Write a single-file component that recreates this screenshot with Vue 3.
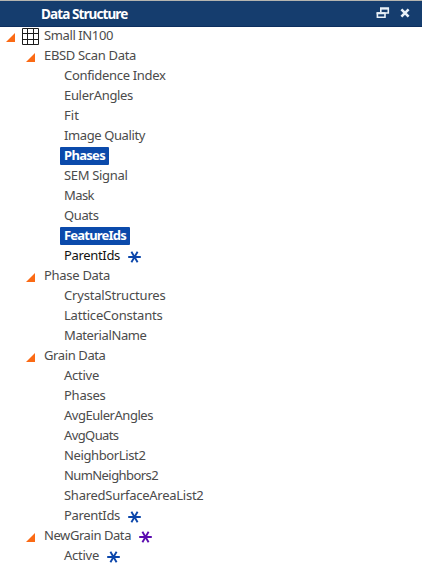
<script setup>
import { ref, onMounted } from 'vue'

// level: nesting depth, w: label width in px
const rows = [
  { label: 'Small IN100', level: 0, w: 69, grid: true },
  { label: 'EBSD Scan Data', level: 1, w: 92 },
  { label: 'Confidence Index', level: 2, w: 101.5 },
  { label: 'EulerAngles', level: 2, w: 69 },
  { label: 'Fit', level: 2, w: 15 },
  { label: 'Image Quality', level: 2, w: 81 },
  { label: 'Phases', level: 2, w: 41, selected: true },
  { label: 'SEM Signal', level: 2, w: 63.5 },
  { label: 'Mask', level: 2, w: 30 },
  { label: 'Quats', level: 2, w: 34.5 },
  { label: 'FeatureIds', level: 2, w: 62, selected: true },
  { label: 'ParentIds', level: 2, w: 56, mark: 'blue', dark: true },
  { label: 'Phase Data', level: 1, w: 66 },
  { label: 'CrystalStructures', level: 2, w: 101.5 },
  { label: 'LatticeConstants', level: 2, w: 98.5 },
  { label: 'MaterialName', level: 2, w: 82.5 },
  { label: 'Grain Data', level: 1, w: 61.5 },
  { label: 'Active', level: 2, w: 35 },
  { label: 'Phases', level: 2, w: 41.5 },
  { label: 'AvgEulerAngles', level: 2, w: 89 },
  { label: 'AvgQuats', level: 2, w: 54.5 },
  { label: 'NeighborList2', level: 2, w: 81.5 },
  { label: 'NumNeighbors2', level: 2, w: 94 },
  { label: 'SharedSurfaceAreaList2', level: 2, w: 139.5 },
  { label: 'ParentIds', level: 2, w: 56, mark: 'blue' },
  { label: 'NewGrain Data', level: 1, w: 87, mark: 'purple' },
  { label: 'Active', level: 2, w: 35, mark: 'blue' },
]

const labels = ref([])
const tracking = ref(rows.map(() => 0))

// Spread the letters so each label fills its own width
onMounted(() => {
  tracking.value = labels.value.map((el, i) => {
    const natural = el.getBoundingClientRect().width
    return (rows[i].w - natural) / rows[i].label.length
  })
})
</script>

<template>
  <section class="panel">
    <header class="bar">
      <h1 class="title">Data Structure</h1>
      <svg class="restore" width="14" height="12" viewBox="0 0 14 12">
        <path d="M4.8 5V1.4H12.3V6H9.6M1.4 6H9V10.2H1.4Z" />
        <path class="thick" d="M4 1.6H13M.6 6.2H9.4" />
      </svg>
      <svg class="close" width="10" height="10" viewBox="0 0 10 10">
        <path d="M1.4 1.4L8.6 8.6M8.6 1.4L1.4 8.6" />
      </svg>
    </header>
    <ul class="tree">
      <li v-for="(row, i) in rows" :key="i" class="row" :class="'level' + row.level">
        <svg v-if="row.level < 2" class="arrow" width="9" height="9" viewBox="0 0 9 9">
          <path d="M9 0V9H0Z" />
        </svg>
        <svg v-if="row.grid" class="grid" width="17" height="17" viewBox="0 0 17 17">
          <path d="M.5 .5H16.5V16.5H.5ZM5.5 0V17M11.5 0V17M0 5.5H17M0 11.5H17" />
        </svg>
        <span class="tag" :class="{ selected: row.selected, dark: row.dark }">
          <span
            :ref="(el) => { if (el) labels[i] = el }"
            class="label"
            :style="{ letterSpacing: tracking[i] + 'px' }"
          >{{ row.label }}</span>
        </span>
        <svg v-if="row.mark" class="mark" :class="row.mark" width="13" height="12" viewBox="0 0 13 12">
          <path d="M.2 6H12.8M3.4 .8L9.6 11.2M9.6 .8L3.4 11.2" />
        </svg>
      </li>
    </ul>
  </section>
</template>

<style>
body {
  margin: 0;
  background: #fff;
}
</style>

<style scoped>
.panel {
  height: 582px;
  overflow: hidden;
  background: #fff;
  font-family: "Noto Sans", "Open Sans", sans-serif;
  font-size: 13px;
}
.bar {
  box-sizing: border-box;
  height: 27px;
  display: flex;
  align-items: center;
  padding: 0 12px 0 41px;
  background: #153d6e;
  border-top: 1px solid #b5b5b0;
  border-bottom: 1px solid #0d2f5f;
}
.title {
  flex: 1;
  margin: 0;
  color: #fff;
  font-size: 13.5px;
  font-weight: 700;
  line-height: 20px;
  letter-spacing: -0.9px;
}
.restore,
.close {
  margin-bottom: 2px;
  fill: none;
  stroke: #e9f1f8;
  stroke-width: 1.6;
}
.restore .thick {
  stroke-width: 2;
}
.close {
  margin-left: 10px;
  stroke-width: 2.6;
}
.tree {
  list-style: none;
  margin: 0;
  padding: 0;
}
.row {
  display: flex;
  align-items: center;
  height: 20px;
}
.row:first-child {
  height: 19px;
}
.level0 {
  padding-left: 6px;
}
.level1 {
  padding-left: 26px;
}
.level2 {
  padding-left: 60px;
}
.arrow {
  margin-top: 2px;
  margin-right: 5px;
  fill: #fb6a14;
}
.grid {
  margin: 0 1px 0 2px;
  fill: none;
  stroke: #1c1c1c;
  stroke-width: 1;
}
.tag {
  height: 18px;
  padding: 0 4px;
  border-radius: 1px;
  color: #4b4b4b;
  line-height: 16px;
}
.level0 .tag {
  line-height: 15px;
}
.label {
  white-space: nowrap;
}
.selected {
  background: #0b4aab;
  color: #fff;
  font-weight: 700;
}
.dark {
  color: #111;
}
.mark {
  margin-left: 4px;
  margin-top: 1px;
  fill: none;
  stroke-width: 1.9;
}
.blue {
  stroke: #0b46ab;
}
.purple {
  stroke: #5b0cb0;
}
</style>
